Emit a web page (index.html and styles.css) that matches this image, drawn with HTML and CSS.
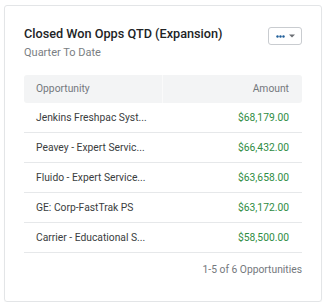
FILE: index.html
```html
<!DOCTYPE html>
<html>
<head>
<meta charset="utf-8">
<link rel="stylesheet" href="styles.css">
</head>
<body>
<div class="card">
  <div class="head">
    <div class="titles">
      <div class="title">Closed Won Opps QTD (Expansion)</div>
      <div class="subtitle">Quarter To Date</div>
    </div>
    <button class="menu">
      <svg width="9" height="3" viewBox="0 0 9 3"><circle cx="1.5" cy="1.5" r="1.2" fill="#1f5e99"/><circle cx="4.5" cy="1.5" r="1.2" fill="#1f5e99"/><circle cx="7.5" cy="1.5" r="1.2" fill="#1f5e99"/></svg>
      <svg width="6" height="4" viewBox="0 0 6 4"><path d="M0 0.5h6L3 3.5z" fill="#6b6f74"/></svg>
    </button>
  </div>
  <div class="table">
    <div class="thead">
      <div class="th">Opportunity</div>
      <div class="th right">Amount</div>
    </div>
    <div class="row"><div class="name">Jenkins Freshpac Syst...</div><div class="amt">$68,179.00</div></div>
    <div class="row"><div class="name">Peavey - Expert Servic...</div><div class="amt">$66,432.00</div></div>
    <div class="row"><div class="name">Fluido - Expert Service...</div><div class="amt">$63,658.00</div></div>
    <div class="row"><div class="name">GE: Corp-FastTrak PS</div><div class="amt">$63,172.00</div></div>
    <div class="row"><div class="name">Carrier - Educational S...</div><div class="amt">$58,500.00</div></div>
  </div>
  <div class="foot">1-5 of 6 Opportunities</div>
</div>
</body>
</html>
```
FILE: styles.css
```css
html, body { margin: 0; padding: 0; background: #fff; }
body { font-family: Roboto, "Liberation Sans", sans-serif; }
.card {
  margin: 5px 0 0 4px;
  width: 318px;
  height: 297px;
  box-sizing: border-box;
  border: 1px solid #e3e5e7;
  border-radius: 3px;
  padding: 19px 19px 0 19px;
  box-shadow: 0 1px 1px rgba(0,0,0,0.04);
}
.head { display: flex; justify-content: space-between; align-items: flex-start; }
.title { font-size: 12.7px; font-weight: 500; color: #222426; line-height: 18px; }
.subtitle { font-size: 11px; color: #7a7e83; line-height: 16px; margin-top: 2px; }
.menu {
  margin-top: 2px;
  width: 34px; height: 18px;
  border: 1px solid #c9ccd0;
  border-radius: 3px;
  background: #fff;
  display: flex; align-items: center; justify-content: center; gap: 4px;
  padding: 0 0 0 1px;
}
.table { margin-top: 14px; }
.thead {
  display: grid; grid-template-columns: 139px 1fr;
  background: #f3f4f5;
  border-radius: 3px;
  height: 28px;
}
.th { font-size: 10.3px; color: #74787d; line-height: 28px; padding: 0 12px; }
.th:first-child { border-right: 1px solid #fafafa; }
.th.right { text-align: right; padding-right: 13px; }
.row {
  display: flex; justify-content: space-between; align-items: center;
  height: 30px;
  box-sizing: border-box;
  border-bottom: 1px solid #e6e8ea;
  padding: 0 13px 0 12px;
  font-size: 10.3px;
}
.name { color: #3a3d40; }
.amt { color: #2f8c43; }
.foot { text-align: right; font-size: 10.3px; line-height: 14px; color: #74787d; margin-top: 10px; }
```
